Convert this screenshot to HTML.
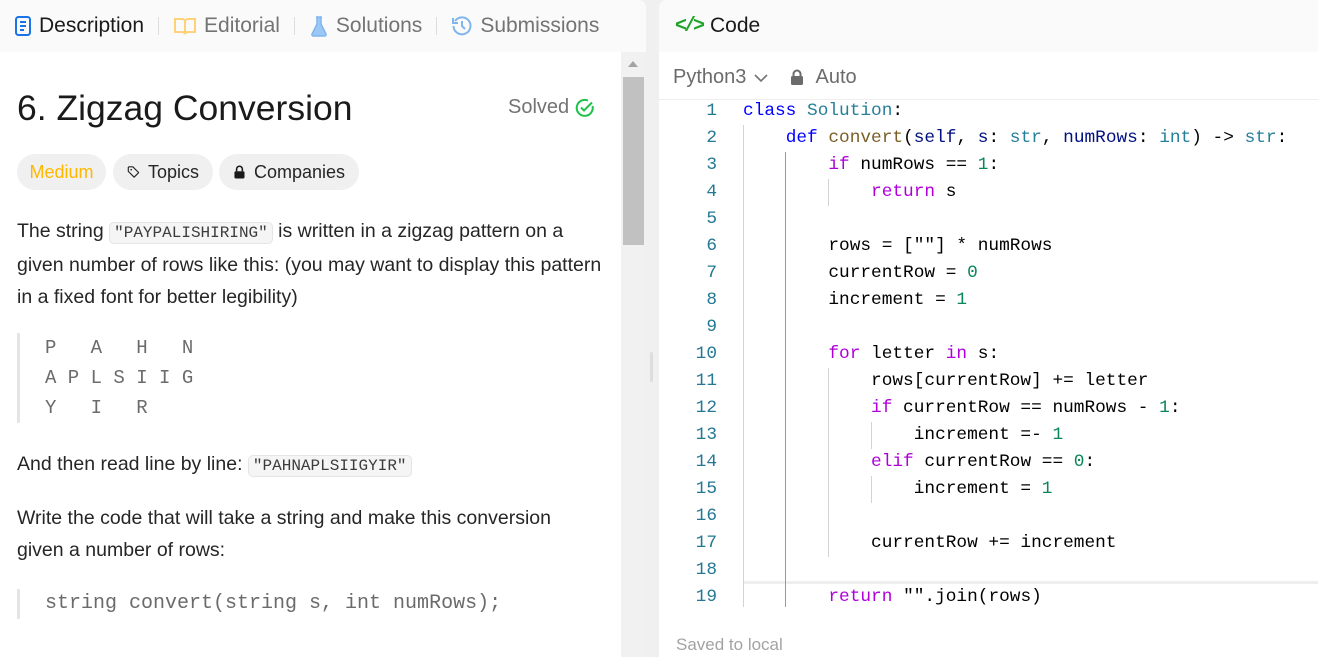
<!DOCTYPE html>
<html><head><meta charset="utf-8"><style>
*{box-sizing:border-box;margin:0;padding:0}
body{width:1318px;height:657px;background:#f0f0f0;font-family:"Liberation Sans",sans-serif;position:relative;overflow:hidden;color:#262626}
.lp{position:absolute;left:0;top:0;width:646px;height:657px;background:#fff;border-radius:0 8px 0 0;overflow:hidden}
.tabs{height:52px;background:#fafafa;display:flex;align-items:center;padding-left:14px;font-size:21px;color:#737373}
.tab{display:flex;align-items:center;gap:7px}
.sep{width:1px;height:18px;background:#ddd;margin:0 14px}
.sb{position:absolute;left:621px;top:52px;width:25px;height:605px;background:#f1f1f1}
.thumb{position:absolute;left:2px;top:25px;width:21px;height:168px;background:#c1c1c1}
.abs{position:absolute}
h1{position:absolute;left:17px;top:88px;font-size:35.5px;font-weight:500;color:#1a1a1a}
.pill{position:absolute;top:154px;height:36px;border-radius:18px;background:#f0f0f0;font-size:18px;display:flex;align-items:center;gap:8px;padding:0 14px}
p{position:absolute;left:17px;font-size:19.5px;line-height:32px;color:#262626;width:585px}
code{font-family:"Liberation Mono",monospace;font-size:16px;background:#f5f5f5;border:1px solid #e5e5e5;border-radius:5px;padding:1px 4px;color:#3c3c3c}
.pre{position:absolute;left:17px;border-left:3px solid #e5e5e5;padding-left:25px;font-family:"Liberation Mono",monospace;color:#6b6b6b;font-size:19px;white-space:pre}
.rp{position:absolute;left:659px;top:0;width:659px;height:657px;background:#fff;border-radius:8px 0 0 0;overflow:hidden}
.rh{height:52px;background:#fafafa;display:flex;align-items:center;padding-left:16px;font-size:21px;color:#1a1a1a;gap:4px}
.tb{position:absolute;top:66px;left:14px;font-size:20px;color:#6b6b6b;display:flex;align-items:center}
.hl{position:absolute;top:99px;left:0;width:659px;height:1px;background:#eee}
.code{position:absolute;top:98px;left:0;font-family:"Liberation Mono",monospace;font-size:17.8px;line-height:27px;white-space:pre;color:#000}
.ln{position:absolute;left:0;width:58px;text-align:right;color:#237893}
.cl{position:absolute;left:84px}
.k{color:#0000ff}.t{color:#267f99}.f{color:#795e26}.c{color:#af00db}.n{color:#098658}.p{color:#001080}
.g{position:absolute;width:1px;background:#d3d3d3}
</style></head><body>
<div class="lp">
 <div class="tabs">
  <div class="tab" style="color:#1a1a1a"><svg width="18" height="22" viewBox="0 0 18 22"><rect x="2" y="2" width="14" height="18" rx="2.5" fill="none" stroke="#1a73e8" stroke-width="2"/><path d="M6 7h6M6 11h6M6 15h4" stroke="#1a73e8" stroke-width="2"/></svg>Description</div>
  <div class="sep"></div>
  <div class="tab"><svg width="24" height="20" viewBox="0 0 24 20"><path d="M2 3h7a3 3 0 0 1 3 3v12a3 3 0 0 0-3-2H2zM22 3h-7a3 3 0 0 0-3 3v12a3 3 0 0 1 3-2h7z" fill="none" stroke="#ffd27a" stroke-width="2"/></svg>Editorial</div>
  <div class="sep"></div>
  <div class="tab"><svg width="20" height="22" viewBox="0 0 20 22"><path d="M7 2h6M8 2v7L3 19a1.5 1.5 0 0 0 1.3 2h11.4A1.5 1.5 0 0 0 17 19L12 9V2" fill="#9cc7f5" stroke="#7fb5ee" stroke-width="1.5"/></svg>Solutions</div>
  <div class="sep"></div>
  <div class="tab"><svg width="22" height="22" viewBox="0 0 22 22"><path d="M4 6a8.5 8.5 0 1 1-1.5 5" fill="none" stroke="#7fb5ee" stroke-width="2"/><path d="M2 3v5h5" fill="none" stroke="#7fb5ee" stroke-width="2"/><path d="M11 6v5l3 3" fill="none" stroke="#7fb5ee" stroke-width="2"/></svg>Submissions</div>
 </div>
 <div class="sb"><div class="thumb"></div><div class="abs" style="left:7px;top:9px;border:5px solid transparent;border-bottom:6px solid #a3a3a3;border-top:0"></div></div>
 <h1>6. Zigzag Conversion</h1>
 <div class="abs" style="left:508px;top:96px;font-size:20px;color:#737373;display:flex;align-items:center;gap:6px">Solved<svg width="20" height="20" viewBox="0 0 20 20"><path d="M17.5 8A8 8 0 1 1 13 2.6" fill="none" stroke="#1ec24a" stroke-width="2"/><path d="M6 9.5l3 3 8-8" fill="none" stroke="#1ec24a" stroke-width="2"/></svg></div>
 <div class="pill" style="left:17px;width:89px;color:#ffb800;justify-content:center">Medium</div>
 <div class="pill" style="left:113px;width:100px"><svg width="22" height="22" viewBox="0 0 20 20"><path d="M2 3v6l9 9 7-7-9-9H3z" fill="none" stroke="#262626" stroke-width="1.8" stroke-linejoin="round"/><circle cx="6.5" cy="6.5" r="1.3" fill="#262626"/></svg>Topics</div>
 <div class="pill" style="left:219px;width:140px"><svg width="18" height="20" viewBox="0 0 18 20"><path d="M5 9V6a4 4 0 0 1 8 0v3" fill="none" stroke="#1a1a1a" stroke-width="2.2"/><rect x="2" y="9" width="14" height="10" rx="2" fill="#1a1a1a"/></svg>Companies</div>
 <p style="top:215px">The string <code>"PAYPALISHIRING"</code> is written in a zigzag pattern on a given number of rows like this: (you may want to display this pattern in a fixed font for better legibility)</p>
 <div class="pre" style="top:333px;line-height:30px;height:90px">P   A   H   N
A P L S I I G
Y   I   R</div>
 <p style="top:448px">And then read line by line: <code>"PAHNAPLSIIGYIR"</code></p>
 <p style="top:502px">Write the code that will take a string and make this conversion given a number of rows:</p>
 <div class="pre" style="top:589px;line-height:30px;height:30px;font-size:20px">string convert(string s, int numRows);</div>
</div>
<div class="abs" style="left:650px;top:352px;width:3px;height:30px;background:#ddd;border-radius:2px"></div>
<div class="rp">
 <div class="rh"><span style="color:#1ea42b;font-size:20px;font-family:'Liberation Mono',monospace;font-weight:bold;letter-spacing:-3px;margin-right:4px">&lt;/&gt;</span>Code</div>
 <div class="tb">Python3 <svg style="margin:0 22px 0 8px" width="14" height="10" viewBox="0 0 14 10"><path d="M1 2l6 6 6-6" fill="none" stroke="#737373" stroke-width="1.6"/></svg><svg width="14" height="17" viewBox="0 0 14 17"><path d="M3.5 7V5a3.5 3.5 0 0 1 7 0v2" fill="none" stroke="#6b6b6b" stroke-width="2"/><rect x="1" y="7" width="12" height="9" rx="1.5" fill="#6b6b6b"/></svg>&nbsp;&nbsp;Auto</div>
 <div class="hl"></div>
 <div class="abs" style="left:84px;top:581px;width:575px;height:3px;background:#eee"></div>
 <div class="g" style="left:84px;top:125px;height:482px"></div>
 <div class="g" style="left:126px;top:152px;height:455px;background:#999"></div>
 <div class="g" style="left:169px;top:179px;height:27px"></div>
 <div class="g" style="left:169px;top:368px;height:189px"></div>
 <div class="g" style="left:212px;top:422px;height:27px"></div>
 <div class="g" style="left:212px;top:476px;height:27px"></div>
 <div class="code">
<div class="ln" style="top:0">1
2
3
4
5
6
7
8
9
10
11
12
13
14
15
16
17
18
19</div>
<div class="cl" style="top:0"><span class="k">class</span> <span class="t">Solution</span>:
    <span class="k">def</span> <span class="f">convert</span>(<span class="p">self</span>, <span class="p">s</span>: <span class="t">str</span>, <span class="p">numRows</span>: <span class="t">int</span>) -&gt; <span class="t">str</span>:
        <span class="c">if</span> numRows == <span class="n">1</span>:
            <span class="c">return</span> s

        rows = [""] * numRows
        currentRow = <span class="n">0</span>
        increment = <span class="n">1</span>

        <span class="c">for</span> letter <span class="c">in</span> s:
            rows[currentRow] += letter
            <span class="c">if</span> currentRow == numRows - <span class="n">1</span>:
                increment =- <span class="n">1</span>
            <span class="c">elif</span> currentRow == <span class="n">0</span>:
                increment = <span class="n">1</span>

            currentRow += increment

        <span class="c">return</span> "".join(rows)</div>
 </div>
 <div class="abs" style="left:17px;top:635px;font-size:17px;color:#a3a3a3">Saved to local</div>
</div>
</body></html>
